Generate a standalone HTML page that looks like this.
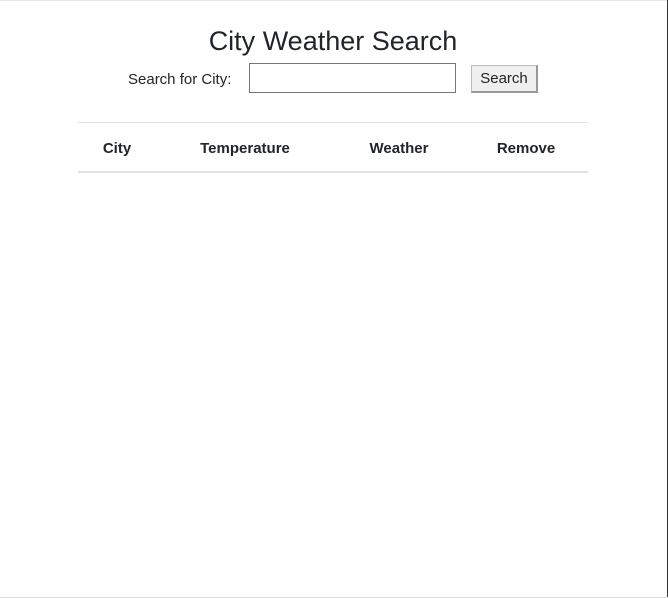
<!DOCTYPE html>
<html><head><meta charset="utf-8"><style>
html,body{margin:0;padding:0;background:#fff;}
body{width:668px;height:598px;position:relative;overflow:hidden;font-family:"Liberation Sans",sans-serif;color:#212529;}
.t{position:absolute;white-space:nowrap;}
.top{position:absolute;left:0;top:0;width:668px;height:1px;background:#e6e6e6;}
.right{position:absolute;left:667px;top:0;width:1px;height:598px;background:#333;}
.bottom{position:absolute;left:0;top:597px;width:668px;height:1px;background:#e0e0e0;}
h1{position:absolute;left:0;width:666px;top:23px;margin:0;text-align:center;font-weight:400;font-size:27px;line-height:36px;}
.inp{position:absolute;left:249px;top:63px;width:205px;height:28px;border:1px solid #767676;}
.btn{position:absolute;left:471px;top:65px;width:64px;height:25px;background:#efefef;border:1px solid #bbb;border-right:2px solid #999;border-bottom:2px solid #999;font-size:15px;line-height:26px;text-align:center;}
.l1{position:absolute;left:78px;top:122px;width:510px;height:1px;background:#dee2e6;}
.l2{position:absolute;left:78px;top:171px;width:510px;height:2px;background:#dee2e6;}
.h{position:absolute;top:140px;font-weight:700;font-size:15px;line-height:18px;transform:translateX(-50%);white-space:nowrap;}
</style></head><body>
<div class="top"></div><div class="right"></div><div class="bottom"></div>
<h1>City Weather Search</h1>
<div class="t" style="left:128px;top:71px;font-size:15px;line-height:18px;">Search for City:</div>
<div class="inp"></div>
<div class="btn">Search</div>
<div class="l1"></div>
<div class="h" style="left:117px">City</div>
<div class="h" style="left:245px">Temperature</div>
<div class="h" style="left:399px">Weather</div>
<div class="h" style="left:526px">Remove</div>
<div class="l2"></div>
</body></html>
